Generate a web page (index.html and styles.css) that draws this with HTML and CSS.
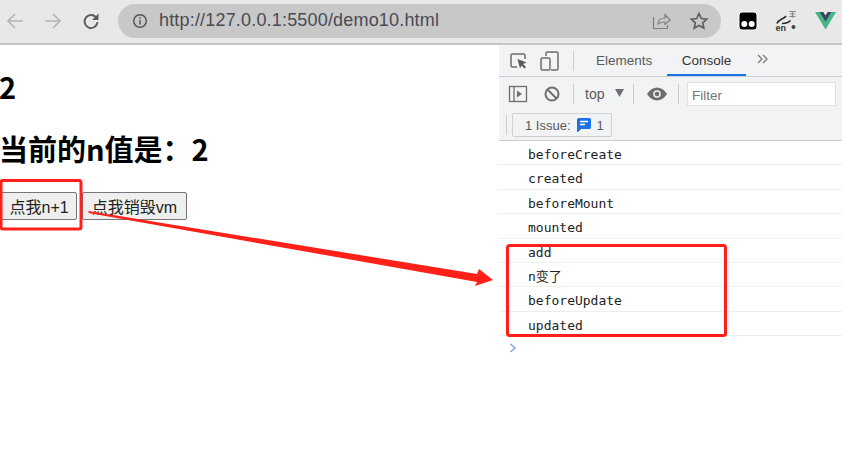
FILE: index.html
```html
<!DOCTYPE html>
<html lang="zh">
<head>
<meta charset="utf-8">
<title>demo10</title>
<link rel="stylesheet" href="styles.css">
</head>
<body>
<header class="browser">
  <svg class="nav" width="20" height="20" viewBox="0 0 20 20"><path d="M18 10H3.500M10 3 3 10l7 7" fill="none" stroke="#b4b4b4" stroke-width="1.700"/></svg>
  <svg class="nav" width="20" height="20" viewBox="0 0 20 20"><path d="M2 10h15M10 3l7 7-7 7" fill="none" stroke="#b4b4b4" stroke-width="1.700"/></svg>
  <svg class="nav reload" width="20" height="20" viewBox="0 0 20 20"><path d="M15.500 7A6.500 6.500 0 1 0 16.500 11" fill="none" stroke="#5c5c5c" stroke-width="1.900"/><path d="M17.500 2.500v6.500h-6.500z" fill="#5c5c5c"/></svg>
  <div class="omnibox">
    <svg width="16" height="16" viewBox="0 0 16 16"><circle cx="8" cy="8" r="6.300" fill="none" stroke="#555" stroke-width="1.500"/><path d="M8 7v4.500M8 4.300v1.500" stroke="#555" stroke-width="1.500"/></svg>
    <span class="url">http://127.0.0.1:5500/demo10.html</span>
    <svg class="omni-share" width="20" height="20" viewBox="0 0 20 20"><path d="M2.500 6v11.500h14V14M7 13c0-4 3-6 7-6V3.500l5 5.500-5 4.500V11c-3 0-5 .5-7 2z" fill="none" stroke="#808080" stroke-width="1.200"/></svg>
    <svg width="20" height="20" viewBox="0 0 20 20"><path d="M10 2.500l2.300 5 5.400.6-4 3.700 1.100 5.400L10 14.500l-4.800 2.700 1.100-5.400-4-3.700 5.400-.6z" fill="none" stroke="#5e5e5e" stroke-width="1.700"/></svg>
  </div>
  <div class="extensions">
    <svg width="20" height="20" viewBox="0 0 20 20"><rect x="1" y="1" width="18" height="18" rx="3" fill="#000" stroke="#fff" stroke-width="1"/><circle cx="6.300" cy="13" r="3" fill="#fff"/><circle cx="13.700" cy="13" r="3" fill="#fff"/></svg>
    <svg class="ext-translate" width="22" height="22" viewBox="0 0 22 22"><path d="M2 13.500c.5-2 2-3 4-4M6 9.500c2-1 3.500-1.500 5-3.500" fill="none" stroke="#2b2b2b" stroke-width="1.700"/><path d="M7 13.500c3 0 6-.5 8.500-3" fill="none" stroke="#2b2b2b" stroke-width="1.600"/><path d="M14 1.500h7M15 4h5M14.500 6.500h6M17.500 1v7" stroke="#8a8a8a" stroke-width="1.200"/><circle cx="18.500" cy="17" r="2" fill="#444"/><text x="0.500" y="20.500" class="ext-text">en</text></svg>
    <svg class="ext-vue" width="21" height="19" viewBox="0 0 21 19"><path d="M0 1h4.500L10.500 11 16.500 1H21L10.500 18.500z" fill="#41b883"/><path d="M4.500 1h3.800l2.200 3.600L12.700 1h3.800L10.500 11z" fill="#35495e"/></svg>
  </div>
</header>
<main class="main">
  <section class="page">
    <h1 class="count">2</h1>
    <h1 class="title">当前的n值是：2</h1>
    <div class="buttons">
      <button class="btn">点我n+1</button>
      <button class="btn btn-wide">点我销毁vm</button>
    </div>
  </section>
  <aside class="devtools">
    <div class="tabs">
      <svg class="tool-inspect" width="20" height="20" viewBox="0 0 20 20"><path d="M8 16H3.500A1.500 1.500 0 0 1 2 14.500v-10A1.500 1.500 0 0 1 3.500 3h11A1.500 1.500 0 0 1 16 4.500V8" fill="none" stroke="#6e6e6e" stroke-width="1.500"/><path d="M8.500 8l9 3.500-3.500 1.500 3 3-1.500 1.500-3-3L11 17.500z" fill="#5a5a5a"/></svg>
      <svg class="tool-device" width="20" height="20" viewBox="0 0 20 20"><path d="M6 5V2.500A1.500 1.500 0 0 1 7.500 1h9A1.500 1.500 0 0 1 18 2.500v15a1.500 1.500 0 0 1-1.500 1.500H11" fill="none" stroke="#6e6e6e" stroke-width="1.500"/><rect x="1" y="7" width="9" height="12" rx="1.500" fill="none" stroke="#6e6e6e" stroke-width="1.500"/></svg>
      <i class="sep sep-tabs"></i>
      <span class="tab">Elements</span>
      <span class="tab active">Console</span>
      <svg class="more" width="11" height="10" viewBox="0 0 11 10"><path d="M1 1l4 4-4 4M6 1l4 4-4 4" fill="none" stroke="#7a7a7a" stroke-width="1.300"/></svg>
    </div>
    <div class="controls">
      <svg class="dock" width="20" height="20" viewBox="0 0 20 20"><rect x="1.500" y="2.500" width="17" height="15" fill="none" stroke="#6e6e6e" stroke-width="1.300"/><path d="M6 3v14" stroke="#6e6e6e" stroke-width="1.300"/><path d="M9 6.500l5 3.500-5 3.500z" fill="#6e6e6e"/></svg>
      <svg class="clear" width="16" height="16" viewBox="0 0 16 16"><circle cx="8" cy="8" r="6.500" fill="none" stroke="#6e6e6e" stroke-width="2"/><path d="M3.500 3.500l9 9" stroke="#6e6e6e" stroke-width="2"/></svg>
      <i class="sep sep-a"></i>
      <span class="context">top</span>
      <svg class="caret" width="9" height="8" viewBox="0 0 9 8"><path d="M0 0h9L4.500 8z" fill="#6e6e6e"/></svg>
      <i class="sep sep-b"></i>
      <svg class="eye" width="20" height="14" viewBox="0 0 20 14"><path d="M0 7c3-4.500 6.500-6.500 10-6.500S17 2.500 20 7c-3 4.500-6.500 6.500-10 6.500S3 11.500 0 7z" fill="#6e6e6e"/><circle cx="10" cy="7" r="3.800" fill="#f1f3f4"/><circle cx="10" cy="7" r="2.300" fill="#6e6e6e"/></svg>
      <i class="sep sep-c"></i>
      <div class="filter">Filter</div>
    </div>
    <div class="issues">
      <i class="sep"></i>
      <div class="issue-btn"><span>1 Issue:</span>
        <svg width="14" height="14" viewBox="0 0 14 14"><path d="M1.500 0h11A1.500 1.500 0 0 1 14 1.500v8a1.500 1.500 0 0 1-1.500 1.500H4L1 14H0V1.500A1.500 1.500 0 0 1 1.500 0z" fill="#1a73e8"/><path d="M3 3.500h8M3 6.500h5" stroke="#fff" stroke-width="1.300"/></svg>
        <span>1</span></div>
    </div>
    <ul class="log">
      <li>beforeCreate</li>
      <li>created</li>
      <li>beforeMount</li>
      <li>mounted</li>
      <li>add</li>
      <li>n变了</li>
      <li>beforeUpdate</li>
      <li>updated</li>
    </ul>
    <svg class="prompt" width="8" height="10" viewBox="0 0 8 10"><path d="M1.500 1 6 5 1.500 9" fill="none" stroke="#80a6ea" stroke-width="1.600"/></svg>
  </aside>
</main>
<svg class="marks" width="842" height="464" viewBox="0 0 842 464">
  <rect x="1" y="180.500" width="80" height="48.500" rx="2" fill="none" stroke="#ff2119" stroke-width="3"/>
  <rect x="507.500" y="245.500" width="218" height="90" rx="2" fill="none" stroke="#ff2119" stroke-width="3"/>
  <path d="M88.500 211 477 274 479 269 493 280 475 286 477 282 88.500 213z" fill="#ff2119"/>
</svg>
</body>
</html>
```
FILE: styles.css
```css
* { box-sizing: border-box; }
html, body { margin: 0; padding: 0; }
body {
  width: 842px;
  height: 464px;
  overflow: hidden;
  background: #fff;
  position: relative;
  font-family: "Liberation Sans", "Noto Sans CJK SC", sans-serif;
  display: flex;
  flex-direction: column;
}
.browser {
  height: 45px;
  flex: none;
  display: flex;
  align-items: center;
  padding: 0 6px 2px 5px;
  background: #e8e8e8;
  border-bottom: 2px solid #c6c6c6;
}
.nav { margin-right: 18px; flex: none; }
.nav.reload { margin-right: 16px; }
.omnibox {
  width: 603px;
  height: 34px;
  margin-left: 1px;
  border-radius: 17px;
  background: #c8c8c8;
  display: flex;
  align-items: center;
  padding: 0 12px 0 14px;
}
.url {
  flex: 1;
  margin-left: 11px;
  font-size: 18px;
  color: #4a4a55;
  letter-spacing: 0.18px;
}
.omni-share { margin-right: 18px; }
.extensions {
  display: flex;
  align-items: center;
  margin-left: auto;
}
.ext-translate { margin-left: 17px; }
.ext-vue { margin-left: 18px; }
.ext-text { font: bold 9px "Liberation Sans", sans-serif; fill: #333; }
.main { flex: 1; display: flex; min-height: 0; }
.page { width: 499px; flex: none; padding-top: 23px; }
.count, .title {
  margin: 0 0 0 -1px;
  font-family: "Noto Sans CJK SC", "Liberation Sans", sans-serif;
  font-size: 29px;
  line-height: 36px;
  font-weight: 700;
  color: #000;
}
.title { margin-top: 26px; }
.buttons { margin-top: 26px; padding-left: 1px; display: flex; gap: 5px; }
.btn {
  font: 16px "Liberation Sans", "Noto Sans CJK SC", sans-serif;
  height: 28px;
  padding: 0 7.500px;
  color: #222;
  background: #efefef;
  border: 1px solid #767676;
  border-radius: 2px;
}
.btn-wide { padding: 0 8.500px; }
.devtools { flex: 1; position: relative; background: #fff; font-size: 13.500px; color: #5a5a5a; }
.sep { width: 1px; height: 20px; background: #ccc; flex: none; }
.tabs {
  height: 32px;
  display: flex;
  align-items: center;
  background: #f1f3f4;
  border-bottom: 1px solid #cacdd1;
  padding-left: 10px;
}
.tool-device { margin-left: 11px; }
.sep-tabs { margin-left: 13px; }
.tab { height: 31px; display: flex; align-items: center; }
.tab:first-of-type { margin-left: 22px; width: 71px; }
.tab.active { color: #333; border-bottom: 2px solid #1a73e8; padding-top: 2px; width: 79px; justify-content: center; }
.more { margin: -3px 0 0 11px; }
.controls {
  height: 33px;
  display: flex;
  align-items: center;
  background: #f1f3f4;
  padding-left: 9px;
}
.clear { margin-left: 16px; }
.sep-a { margin-left: 13px; }
.context { margin-left: 11px; width: 21px; font-size: 14px; }
.caret { margin-left: 9px; margin-top: -1px; }
.sep-b { margin-left: 9px; }
.eye { margin-left: 13px; }
.sep-c { margin-left: 11px; }
.filter {
  width: 149px;
  height: 24px;
  margin-left: 8px;
  background: #fff;
  border: 1px solid #e0e0e0;
  padding: 5px 4px 3px;
  color: #757575;
  line-height: 16px;
}
.issues {
  height: 31px;
  display: flex;
  align-items: center;
  gap: 5px;
  padding-left: 7px;
  background: #f1f3f4;
  border-bottom: 1px solid #cacdd1;
}
.issue-btn {
  height: 24px;
  width: 100px;
  padding: 0 0 0 12px;
  display: flex;
  align-items: center;
  gap: 6px;
  border: 1px solid #d0d0d0;
  border-radius: 2px;
  font-size: 13px;
}
.log { list-style: none; margin: 0; padding: 0; }
.log li {
  height: 24.400px;
  padding: 4px 0 0 29px;
  border-bottom: 1px solid #eee;
  font: 13px/20px "DejaVu Sans Mono", "Noto Sans CJK SC", monospace;
  color: #222;
}
.prompt { margin: 7px 0 0 10px; display: block; }
.marks { position: absolute; left: 0; top: 0; pointer-events: none; }
```
